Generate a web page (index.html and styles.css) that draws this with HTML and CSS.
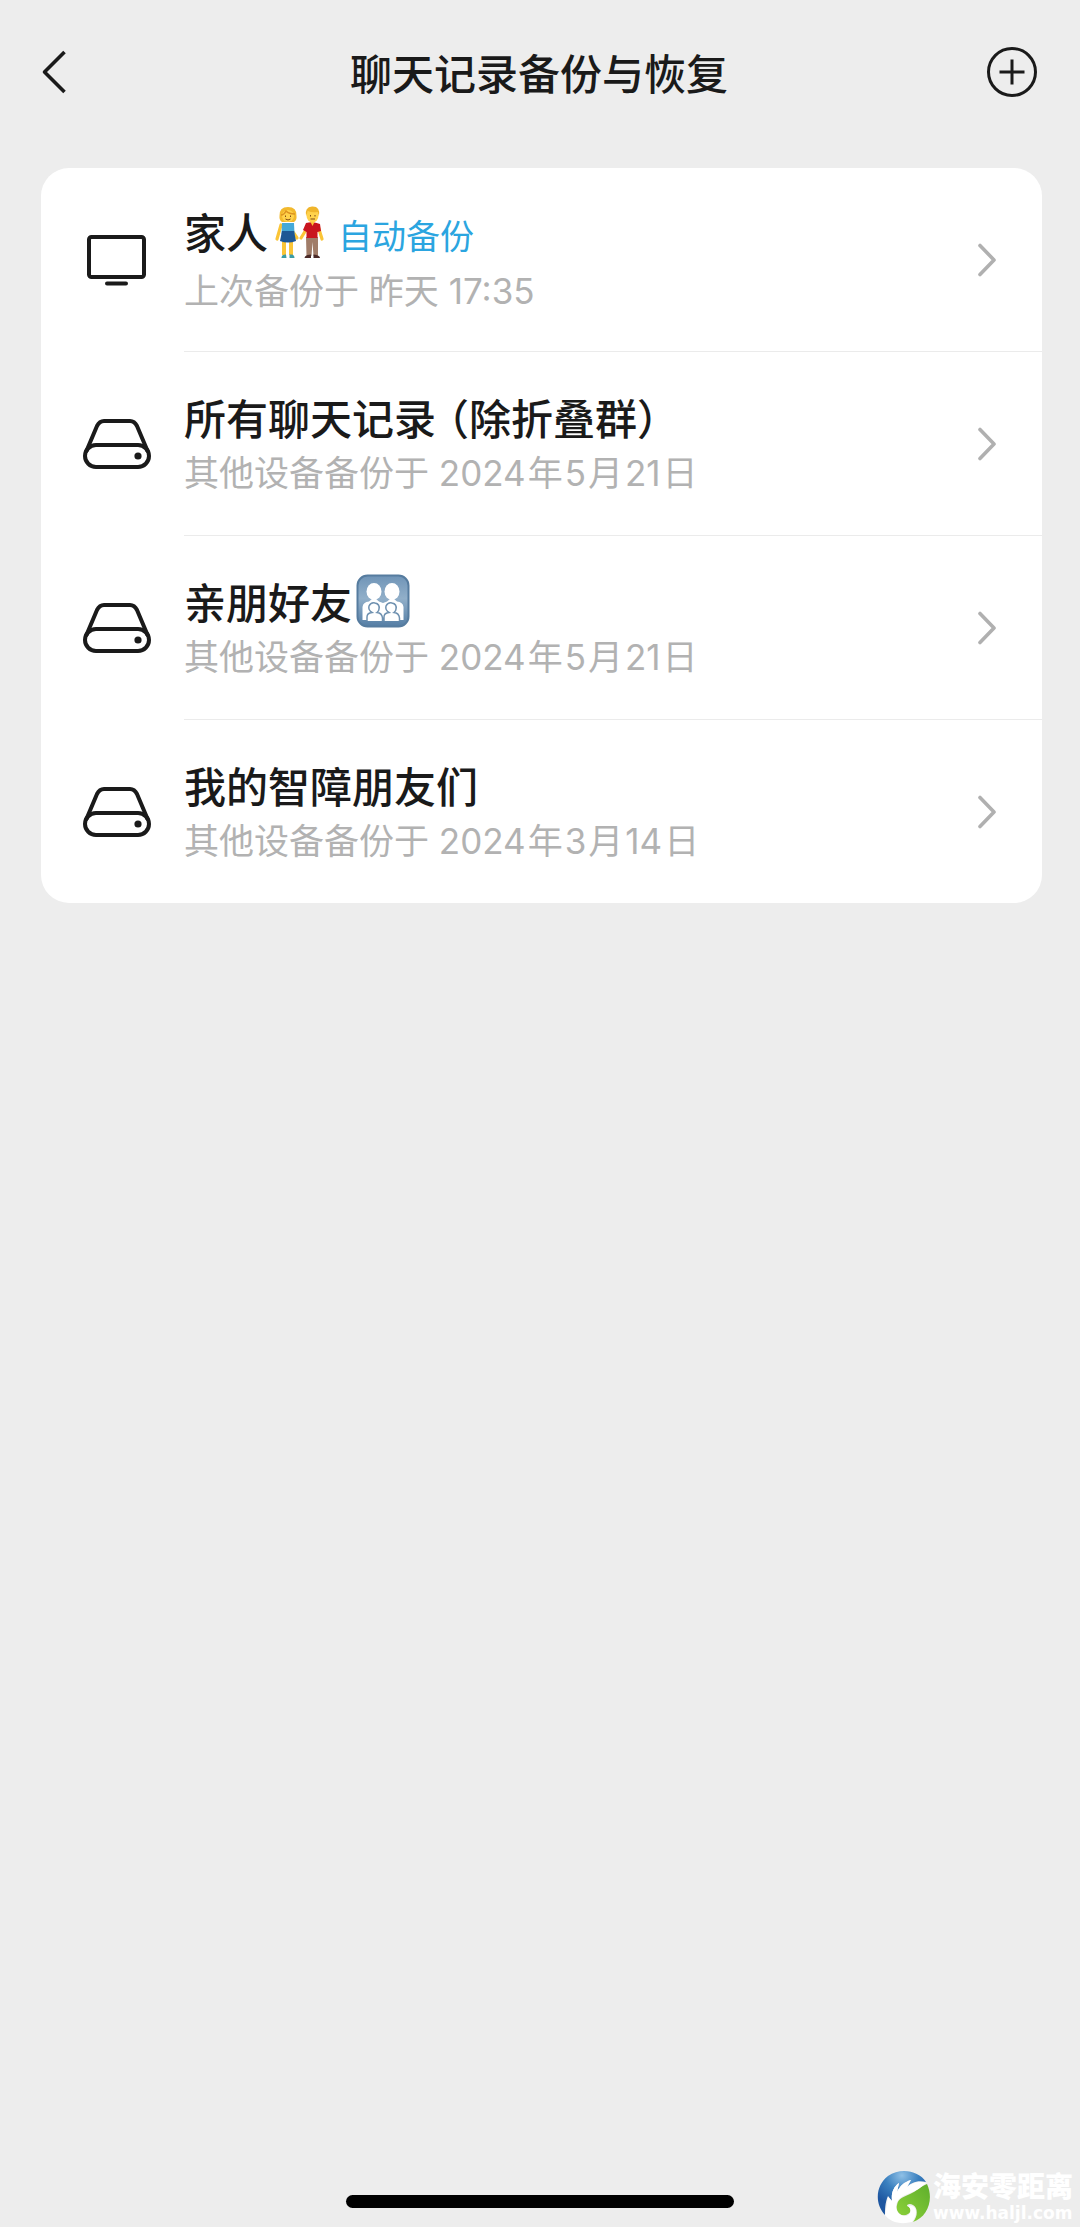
FILE: index.html
```html
<!DOCTYPE html>
<html lang="zh-CN">
<head>
<meta charset="utf-8">
<meta name="viewport" content="width=device-width, initial-scale=1">
<title>聊天记录备份与恢复</title>
<link rel="stylesheet" href="styles.css">
</head>
<body>
<svg class="sprite" aria-hidden="true">
  <symbol id="drive" viewBox="0 0 72 54">
    <g fill="none" stroke="#1a1a1a" stroke-width="4" stroke-linejoin="round">
      <rect x="4" y="28" width="64" height="22" rx="11"/>
      <path d="M5 35 16 9Q18.500 4 23 4H49Q53.500 4 56 9L67 35"/>
    </g>
    <circle cx="57" cy="39" r="3.600" fill="#1a1a1a"/>
  </symbol>
  <symbol id="chevron" viewBox="0 0 20 36">
    <path d="M2 3.500 16 18 2 32.500" fill="none" stroke="#b0b0b0" stroke-width="3.600" stroke-linecap="round" stroke-linejoin="round"/>
  </symbol>
</svg>

<header class="bar">
  <button class="icon-button" type="button" aria-label="返回">
    <svg width="26" height="44" viewBox="0 0 26 44"><path d="M24.500 2 4.500 22 24.500 42" fill="none" stroke="#1a1a1a" stroke-width="3.600" stroke-linejoin="round"/></svg>
  </button>
  <h1 class="bar-title">聊天记录备份与恢复</h1>
  <button class="icon-button" type="button" aria-label="新建备份">
    <svg width="52" height="52" viewBox="0 0 52 52"><g fill="none" stroke="#1a1a1a" stroke-width="3"><circle cx="26" cy="26" r="23.500"/><path d="M26 13.500V38.500M13.500 26H38.500"/></g></svg>
  </button>
</header>

<main>
  <ul class="card">
    <li class="row">
      <a class="row-link" href="#family">
        <svg class="row-icon" width="72" height="54" viewBox="0 0 72 54"><g fill="none" stroke="#1a1a1a"><rect x="8" y="4" width="55" height="40" rx="2.500" stroke-width="4"/><path d="M26 50.500H45" stroke-width="4" stroke-linecap="round"/></g></svg>
        <span class="row-body">
          <span class="row-text">
            <span class="name">家人
              <svg class="emoji" width="54" height="54" viewBox="0 0 54 54" role="img" aria-label="手拉手的男女">
                <path d="M9 19 5 33M17 20 25 32M37 19 29 32M46 20 50 33" fill="none" stroke="#fbc537" stroke-width="3.200" stroke-linecap="round"/>
                <path d="M12 33V49M19 33V49" stroke="#fbc537" stroke-width="4"/>
                <path d="M9.500 51.500Q10 48 14 48.500L14.500 52H9.500ZM17.500 48.500H20Q22.500 49 22.500 52H17.500Z" fill="#3c9ca5"/>
                <path d="M10 17H22L22.500 28H9.500Z" fill="#45a9d8"/>
                <path d="M10 25H22L24 35Q16 38 8 35Z" fill="#1e5794"/>
                <path d="M7.500 10Q7 1 16 1Q25 1 24.500 10Q25 14 22 16H10Q7 14 7.500 10Z" fill="#f2b92e"/>
                <circle cx="16" cy="10" r="6" fill="#ffd24b"/><path d="M9 9Q12 9 14 5Q17 8 23 8" fill="none" stroke="#dd9420" stroke-width="1.500"/>
                <path d="M13.500 9.500V11M18.500 9.500V11M13.500 13Q16 15 18.500 13" fill="none" stroke="#7c4b18"/>
                <path d="M34 31H46V50H41.500L40.500 36 39.500 50H34.500Z" fill="#a07c68"/>
                <path d="M34 17Q41 15 48 18L49 25 45.500 26V32H34.500V26L31 24Z" fill="#c9151e"/>
                <path d="M38 15H43L40.500 20Z" fill="#fbc537"/>
                <path d="M32.500 52Q33 48.500 39 48.500V52ZM41.500 48.500Q48 49 48 52H41.500Z" fill="#4a2a28"/>
                <ellipse cx="40.500" cy="9.500" rx="6" ry="7" fill="#ffd24b"/>
                <path d="M34 10Q32.500 1 40 .500Q48.500 0 47 10L45.500 6Q40 7 36 5Z" fill="#f0b52b"/>
                <path d="M38.500 9V10.500M43 9V10.500M38.500 13H43" fill="none" stroke="#7c4b18"/>
              </svg>
              <span class="tag">自动备份</span>
            </span>
            <span class="note">上次备份于 昨天 17:35</span>
          </span>
          <svg class="chevron" width="20" height="36"><use href="#chevron"/></svg>
        </span>
      </a>
    </li>
    <li class="row">
      <a class="row-link" href="#all">
        <svg class="row-icon" width="72" height="54"><use href="#drive"/></svg>
        <span class="row-body">
          <span class="row-text">
            <span class="name"><span>所有聊天记录<span class="paren paren-open">（</span>除折叠群<span class="paren">）</span></span></span>
            <span class="note">其他设备备份于 <time class="date" datetime="2024-05-21"><span>2024</span><span>年</span><span>5</span><span>月</span><span>21</span><span>日</span></time></span>
          </span>
          <svg class="chevron" width="20" height="36"><use href="#chevron"/></svg>
        </span>
      </a>
    </li>
    <li class="row">
      <a class="row-link" href="#friends">
        <svg class="row-icon" width="72" height="54"><use href="#drive"/></svg>
        <span class="row-body">
          <span class="row-text">
            <span class="name">亲朋好友
              <svg class="emoji" width="54" height="54" viewBox="0 0 54 54" role="img" aria-label="家庭">
                <defs><linearGradient id="tile" x2="0" y2="1"><stop stop-color="#6f94b7"/><stop offset=".45" stop-color="#91afc9"/><stop offset="1" stop-color="#557ea5"/></linearGradient></defs>
                <rect x="1.500" y="1.500" width="51" height="51" rx="10" fill="url(#tile)" stroke="#567c9f" stroke-width="2"/>
                <g fill="#fff"><ellipse cx="18" cy="17.500" rx="7.500" ry="8.500"/><ellipse cx="36" cy="17.500" rx="7.500" ry="8.500"/><path d="M6.500 46V33Q7 28 13 27.500L16 25H20L23 27.500 27 29 31 27.500 34 25H38L41 27.500Q47 28 47.500 33V46Z"/></g>
                <g fill="#fff" stroke="#6f91b0" stroke-width="1.500"><path d="M11 47V43Q11 39 16 38.500Q12 36 13 32Q15 28 19 29Q24 30 23 35Q23 37 21 38.500Q26 39 26.500 44V47M28 47V43Q28 39 33 38.500Q29 36 30 32Q32 28 36 29Q41 30 40 35Q40 37 38 38.500Q43 39 43.500 44V47"/></g>
              </svg>
            </span>
            <span class="note">其他设备备份于 <time class="date" datetime="2024-05-21"><span>2024</span><span>年</span><span>5</span><span>月</span><span>21</span><span>日</span></time></span>
          </span>
          <svg class="chevron" width="20" height="36"><use href="#chevron"/></svg>
        </span>
      </a>
    </li>
    <li class="row">
      <a class="row-link" href="#buddies">
        <svg class="row-icon" width="72" height="54"><use href="#drive"/></svg>
        <span class="row-body">
          <span class="row-text">
            <span class="name">我的智障朋友们</span>
            <span class="note">其他设备备份于 <time class="date" datetime="2024-03-14"><span>2024</span><span>年</span><span>3</span><span>月</span><span>14</span><span>日</span></time></span>
          </span>
          <svg class="chevron" width="20" height="36"><use href="#chevron"/></svg>
        </span>
      </a>
    </li>
  </ul>
</main>

<div class="home-indicator"></div>

<div class="watermark">
  <svg width="54" height="54" viewBox="0 0 54 54" aria-hidden="true">
    <defs>
      <radialGradient id="blue" cx=".5" cy=".1" r=".7"><stop stop-color="#8fc0e6"/><stop offset=".5" stop-color="#3a80bf"/><stop offset="1" stop-color="#1e56a0"/></radialGradient>
      <linearGradient id="green" x1="1" x2="0" y2="1"><stop stop-color="#5fae2c"/><stop offset="1" stop-color="#8ed33a"/></linearGradient>
    </defs>
    <path d="M8 45C-3 33-1 15 11 6C24-3 42 1 49 12C40 10 34 13 30 17L34 10C27 12 23 16 20 22L22 13C16 17 14 24 15 31L11 26C8 33 8 39 8 45Z" fill="url(#blue)"/>
    <path d="M50 14C57 29 51 47 36 52C41 46 41 38 36 35C33 33 30 34 30 36C34 37 35 42 31 44C25 48 18 42 20 35C21 28 27 27 33 24C40 21 44 16 50 14Z" fill="url(#green)"/>
    <path d="M8 45C10 35 10 32 11 27L15 31C14 24 16 17 22 13L20 22C23 16 27 12 34 10L30 17C36 12 43 11 49 13C43 18 39 21 33 23C25 26 20 29 19 36C19 42 23 46 29 46C34 45 35 39 31 36C39 34 42 43 35 52C23 55 13 52 8 45Z" fill="#fff"/>
  </svg>
  <div class="watermark-text">
    <span class="watermark-name">海安零距离</span>
    <span class="watermark-url">www.haljl.com</span>
  </div>
</div>
</body>
</html>
```
FILE: styles.css
```css
* {
  box-sizing: border-box;
}

body {
  position: relative;
  display: flex;
  flex-direction: column;
  min-height: 100vh;
  margin: 0;
  background: #ededed;
  color: #1a1a1a;
  font-family: "Noto Sans CJK SC", sans-serif;
}

svg {
  display: block;
  flex: none;
}

.sprite {
  position: absolute;
  width: 0;
  height: 0;
}

.bar {
  display: flex;
  align-items: center;
  justify-content: space-between;
  height: 144px;
  padding: 0 42px 0 40px;
}

.bar-title {
  margin: 0;
  font-size: 42px;
  font-weight: 500;
  line-height: 56px;
}

.icon-button {
  display: flex;
  align-items: center;
  width: 52px;
  height: 52px;
  padding: 0;
  border: 0;
  background: none;
}

main {
  flex: 1;
  padding: 24px 38px 24px 41px;
}

.card {
  margin: 0;
  padding: 0;
  overflow: hidden;
  border-radius: 28px;
  background: #fff;
  list-style: none;
}

.row-link {
  display: flex;
  align-items: center;
  gap: 31px;
  padding-left: 40px;
  color: inherit;
  text-decoration: none;
}

.row-body {
  display: flex;
  flex: 1;
  align-items: center;
  justify-content: space-between;
  min-height: 184px;
  padding-right: 44px;
  border-bottom: 1px solid #ebebeb;
}

.row:last-child .row-body {
  min-height: 183px;
  border-bottom: 0;
}

.row-text {
  display: flex;
  flex-direction: column;
  padding-top: 3px;
}

.name {
  display: flex;
  align-items: baseline;
  font-size: 42px;
  font-weight: 500;
  line-height: 56px;
}

.emoji {
  align-self: center;
  margin: 0 4px;
}

.tag {
  margin-left: 8px;
  color: #2ba5e0;
  font-size: 34px;
  font-weight: 400;
}

.paren {
  font-feature-settings: "halt";
}

.paren-open {
  margin-left: 12px;
}

.note {
  color: #b2b2b2;
  font-family: Inter, "Noto Sans CJK SC", sans-serif;
  font-size: 35px;
  line-height: 56px;
}

.date {
  display: inline-flex;
  align-items: baseline;
  gap: 2px;
}

.home-indicator {
  width: 36%;
  height: 13px;
  margin: 0 auto 19px;
  border-radius: 7px;
  background: #000;
}

.watermark {
  position: absolute;
  right: 7px;
  bottom: 2px;
  display: flex;
  align-items: center;
  gap: 2px;
  color: #fff;
}

.watermark-text {
  display: flex;
  flex-direction: column;
  padding: 4px 0 2px;
}

.watermark-name {
  font-family: "Liberation Sans", "Noto Sans CJK SC", sans-serif;
  font-size: 28px;
  font-weight: 900;
  line-height: 30px;
}

.watermark-url {
  font-family: "DejaVu Sans", sans-serif;
  font-size: 17px;
  font-weight: 700;
  line-height: 20px;
}
```
